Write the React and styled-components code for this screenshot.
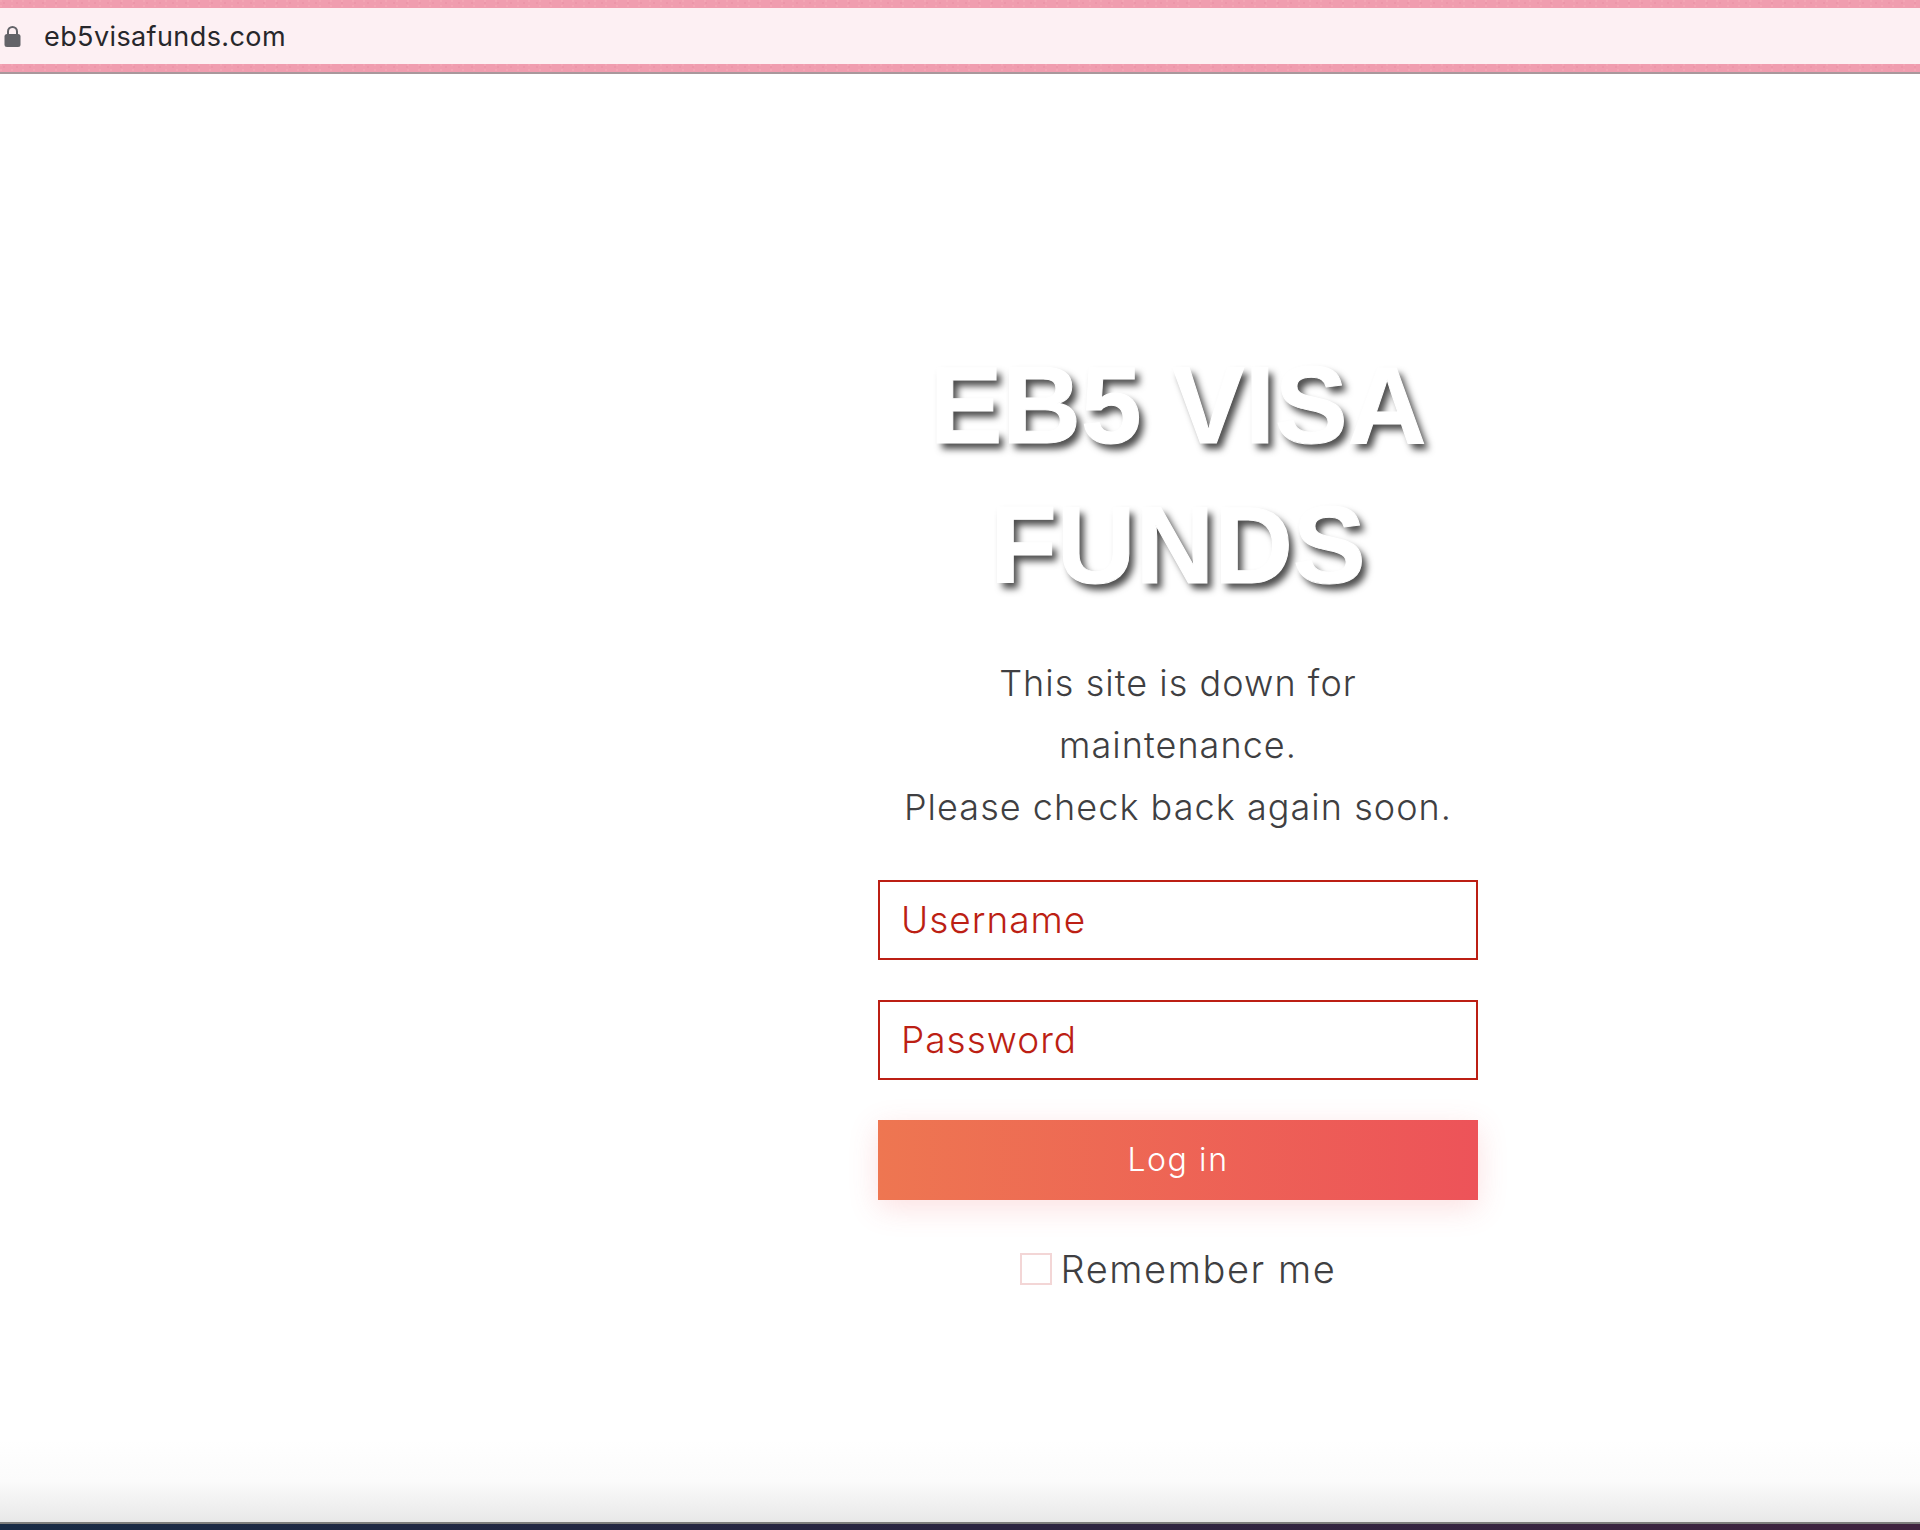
import React from 'react';
import styled, {createGlobalStyle} from 'styled-components';

const GlobalStyle = createGlobalStyle`
    html, body {
        margin: 0;
        padding: 0;
        background: #FFFFFF;
    }
`

const Page = styled.div`
    display: flex;
    flex-direction: column;
    width: 1920px;
    height: 1530px;
    overflow: hidden;
`

const Stripe = styled.div`
    height: 8px;
    background-color: #F09DAF;
    background-image:
        radial-gradient(circle at 1px 1px, #F3A5B4 1px, transparent 1.5px),
        radial-gradient(circle at 4px 3px, #EC96A9 1px, transparent 1.5px);
    background-size: 11px 5px, 13px 7px;
`

const AddressBar = styled.div`
    display: flex;
    align-items: center;
    height: 56px;
    padding-left: 4px;
    background: #FDF0F3;
`

const LockIcon = styled.svg`
    width: 17px;
    height: 22px;
    margin-right: 23px;
    flex: none;
`

const Url = styled.span`
    font-family: Inter, sans-serif;
    font-size: 27px;
    letter-spacing: 0.4px;
    color: #27272B;
`

const BarEdge = styled.div`
    height: 2px;
    background: #A9989C;
`

const Main = styled.main`
    flex: 1;
    display: flex;
    flex-direction: column;
    align-items: center;
    width: 600px;
    margin-left: 878px;
    padding-top: 261px;
`

const Title = styled.h1`
    width: 560px;
    margin: 0 0 37px;
    font-family: "Liberation Sans", Arial, sans-serif;
    font-size: 109px;
    font-weight: bold;
    line-height: 140px;
    text-align: center;
    color: #FFFFFF;
    -webkit-text-stroke: 1px #FFFFFF;
    text-shadow: 5px 6px 7px rgba(0, 0, 0, 0.7);
`

const Message = styled.p`
    margin: 0 0 42px;
    font-family: Inter, sans-serif;
    font-size: 36px;
    font-weight: 300;
    line-height: 62px;
    letter-spacing: 1.05px;
    text-align: center;
    color: #3F3F42;
`

const Field = styled.input`
    display: block;
    box-sizing: border-box;
    width: 600px;
    height: 80px;
    margin-bottom: 40px;
    padding: 0 21px 2px;
    border: 2px solid #BC1F14;
    border-radius: 0;
    outline: none;
    background: #FFFFFF;
    font-family: Inter, sans-serif;
    font-size: 37px;
    font-weight: 300;
    letter-spacing: 1px;
    color: #BC1F14;

    &::placeholder {
        color: #BC1F14;
        opacity: 1;
    }
`

const LoginButton = styled.button`
    display: block;
    width: 600px;
    height: 80px;
    padding: 0 0 2px;
    border: none;
    background: linear-gradient(90deg, #EE7651, #ED5359);
    box-shadow: 0 8px 30px rgba(237, 83, 89, 0.18);
    font-family: Inter, sans-serif;
    font-size: 32px;
    font-weight: 300;
    letter-spacing: 1.6px;
    color: #FFFFFF;
`

const RememberRow = styled.label`
    display: flex;
    align-items: center;
    gap: 9px;
    margin-top: 46px;
    font-family: Inter, sans-serif;
    font-size: 38px;
    font-weight: 300;
    letter-spacing: 1.6px;
    color: #3F3F42;
`

const Checkbox = styled.input`
    appearance: none;
    box-sizing: border-box;
    width: 32px;
    height: 32px;
    margin: 0;
    border: 2px solid #F3D6D6;
    background: #FFFFFF;
`

const BottomFade = styled.div`
    height: 82px;
    background: linear-gradient(180deg, #FFFFFF, #FBFBFB 50%, #E8E8E8);
`

const BottomEdge = styled.div`
    height: 2px;
    background: #7E7E7C;
`

const Dock = styled.div`
    height: 6px;
    background: linear-gradient(90deg, #182B45, #2A2440 50%, #40233F);
`

export default function App() {
    return (
        <Page>
            <GlobalStyle/>
            <Stripe/>
            <AddressBar>
                <LockIcon viewBox="0 0 17 22">
                    <path d="M4 10V6.5a4.5 4.5 0 0 1 9 0V10" fill="none" stroke="#636368" strokeWidth="2"/>
                    <rect x="0.5" y="9" width="16" height="13" rx="2.5" fill="#636368"/>
                </LockIcon>
                <Url>eb5visafunds.com</Url>
            </AddressBar>
            <Stripe/>
            <BarEdge/>
            <Main>
                <Title>EB5 VISA FUNDS</Title>
                <Message>This site is down for<br/>maintenance.<br/>Please check back again soon.</Message>
                <Field type="text" placeholder="Username"/>
                <Field type="password" placeholder="Password"/>
                <LoginButton>Log in</LoginButton>
                <RememberRow><Checkbox type="checkbox"/>Remember me</RememberRow>
            </Main>
            <BottomFade/>
            <BottomEdge/>
            <Dock/>
        </Page>
    )
}
